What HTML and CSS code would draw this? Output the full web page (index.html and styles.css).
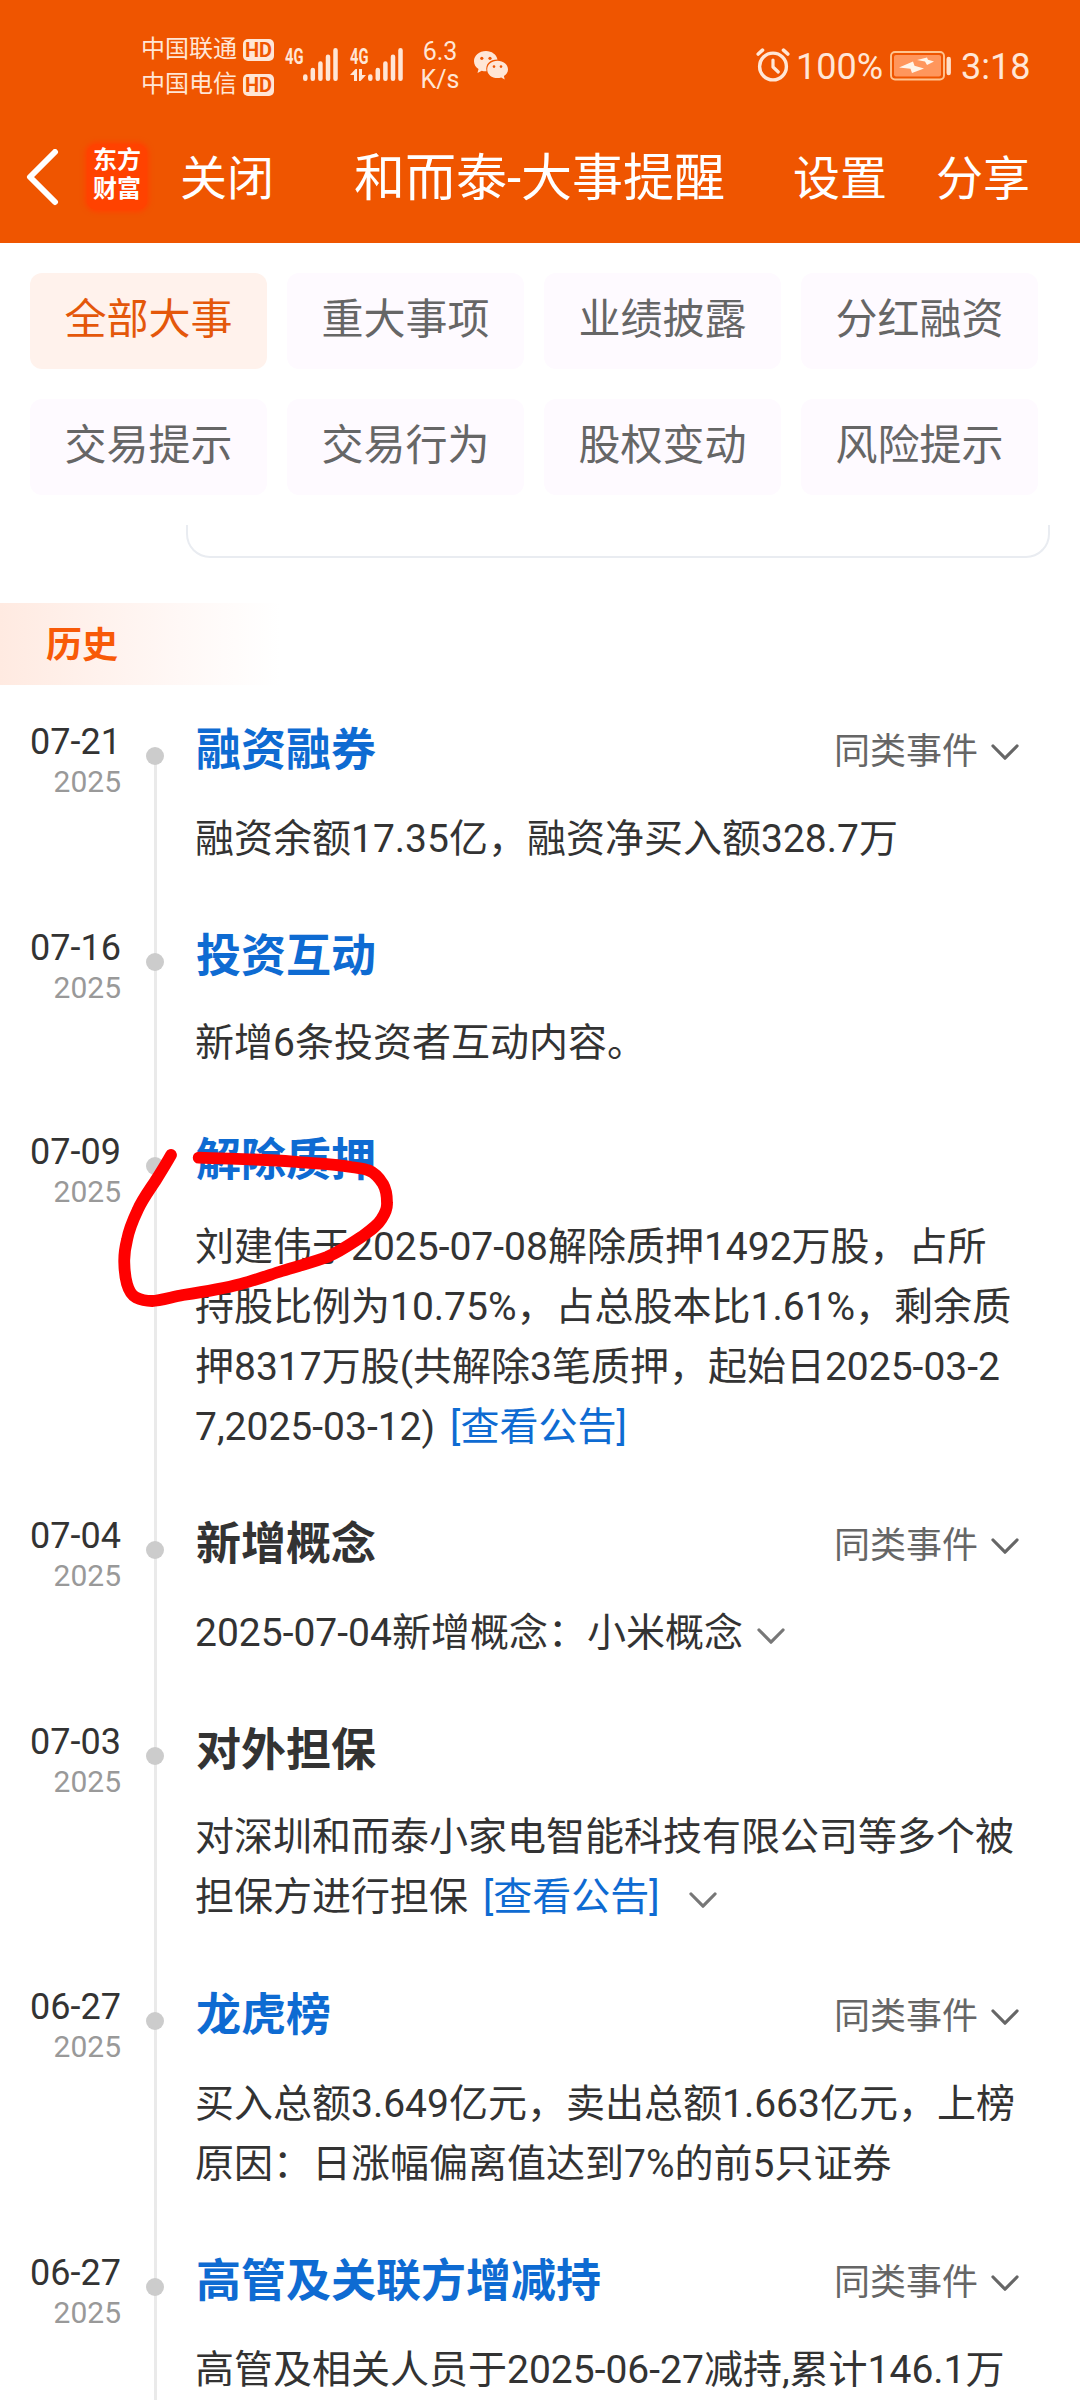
FILE: index.html
```html
<!DOCTYPE html>
<html lang="zh-CN">
<head>
<meta charset="utf-8">
<title>和而泰-大事提醒</title>
<link rel="stylesheet" href="styles.css">
</head>
<body>
<svg class="defs" width="0" height="0" aria-hidden="true">
  <symbol id="chevron" viewBox="0 0 28 17"><path d="M2 2 L14 14.2 L26 2" fill="none" stroke="currentColor" stroke-width="3.2" stroke-linecap="round" stroke-linejoin="round"/></symbol>
  <symbol id="bars" viewBox="0 0 35 33"><path d="M2.3 28.5V30.7M9.8 22V30.7M17.4 15.5V30.7M25 8.7V30.7M32.5 2.3V30.7" fill="none" stroke="currentColor" stroke-width="4.5" stroke-linecap="round"/></symbol>
</svg>
<div class="page">
  <header class="top">
    <div class="status">
      <div class="carriers">
        <div class="carrier"><span>中国联通</span><b class="hd">HD</b></div>
        <div class="carrier"><span>中国电信</span><b class="hd">HD</b></div>
      </div>
      <svg class="signal" width="53" height="33" viewBox="0 0 53 33">
        <text x="0" y="15.500" textLength="18.500" lengthAdjust="spacingAndGlyphs">4G</text>
        <use href="#bars" x="18" y="0" width="35" height="33"/>
      </svg>
      <svg class="signal signal-second" width="53" height="33" viewBox="0 0 53 33">
        <text x="0" y="15.500" textLength="18.500" lengthAdjust="spacingAndGlyphs">4G</text>
        <path d="M0 27 L5.500 21 H7 V33 H4 V27 Z M9 21 H12 V27 H16 L10.500 33 H9 Z" fill="currentColor"/>
        <use href="#bars" x="18" y="0" width="35" height="33"/>
      </svg>
      <div class="speed"><span>6.3</span><span>K/s</span></div>
      <svg class="wechat" width="34" height="30" viewBox="0 0 34 30">
        <path d="M12 1C5.300 1 0 5.500 0 11.200c0 3.300 1.700 6 4.500 7.900L3.500 23l4.200-2.300c1.600.5 3 .7 4.800.6C11 14 16 9.500 23.500 9.500 22.500 4.500 17.700 1 12 1Z" fill="currentColor"/>
        <path d="M23.500 10.700C17.700 10.700 13.200 14.600 13.200 19.400s4.500 8.700 10.300 8.700c1.400 0 2.500-.2 3.700-.6l3.500 1.900-.8-3.300c2.500-1.700 4.100-4 4.100-6.700 0-4.800-4.700-8.700-10.500-8.700Z" fill="currentColor"/>
        <g fill="#ef5500"><circle cx="7.800" cy="8.300" r="1.600"/><circle cx="16" cy="8.300" r="1.600"/><circle cx="20" cy="16.600" r="1.300"/><circle cx="27" cy="16.600" r="1.300"/></g>
      </svg>
      <svg class="alarm" width="34" height="34" viewBox="0 0 34 34" fill="none" stroke="currentColor" stroke-linecap="round">
        <circle cx="17" cy="18.500" r="13.400" stroke-width="3.400"/>
        <path d="M17 12V19L22.300 24" stroke-width="3.200" stroke-linejoin="round"/>
        <path d="M2.200 6L6.500 2.200M31.800 6L27.500 2.200" stroke-width="3.600"/>
      </svg>
      <span class="percent">100%</span>
      <svg class="battery" width="62" height="30" viewBox="0 0 62 30">
        <rect x="1" y="1" width="53" height="27.500" rx="4" fill="none" stroke="#ffc48f" stroke-width="1.900"/>
        <rect x="4" y="4" width="47" height="21.500" rx="2" fill="#ff965c"/>
        <path d="M9 16.500 L23 10.500 L24.500 14.800 L34 17.500 L22 22 L20.500 17.800 Z M27 9 L37 6.500 L38 8.800 L44 10.500 L37 14 L35 10.500 Z" fill="#fff5ea"/>
        <path d="M58.700 8V22" stroke="#ffdfc8" stroke-width="4.400" stroke-linecap="round"/>
      </svg>
      <span class="clock">3:18</span>
    </div>
    <nav class="nav">
      <svg class="back" width="34" height="57" viewBox="0 0 34 57"><path d="M29 3 L4 28 L29 53" fill="none" stroke="#fff" stroke-width="6" stroke-linecap="round" stroke-linejoin="round"/></svg>
      <div class="logo"><span>东方</span><span>财富</span></div>
      <span class="close">关闭</span>
      <h1 class="heading">和而泰-大事提醒</h1>
      <span class="settings">设置</span>
      <span class="share">分享</span>
    </nav>
  </header>

  <section class="filters">
    <span class="chip chip-active">全部大事</span>
    <span class="chip">重大事项</span>
    <span class="chip">业绩披露</span>
    <span class="chip">分红融资</span>
    <span class="chip">交易提示</span>
    <span class="chip">交易行为</span>
    <span class="chip">股权变动</span>
    <span class="chip">风险提示</span>
  </section>

  <div class="card-end"></div>
  <h2 class="section">历史</h2>

  <main class="timeline">
    <article class="event">
      <div class="date"><span class="day">07-21</span><span class="year">2025</span></div>
      <div class="rail rail-first"><i class="dot"></i></div>
      <div class="content">
        <div class="event-head"><h3 class="linked">融资融券</h3><span class="related">同类事件<svg class="chevron"><use href="#chevron"/></svg></span></div>
        <p>融资余额17.35亿，融资净买入额328.7万</p>
      </div>
    </article>
    <article class="event">
      <div class="date"><span class="day">07-16</span><span class="year">2025</span></div>
      <div class="rail"><i class="dot"></i></div>
      <div class="content">
        <div class="event-head"><h3 class="linked">投资互动</h3></div>
        <p>新增6条投资者互动内容。</p>
      </div>
    </article>
    <article class="event">
      <div class="date"><span class="day">07-09</span><span class="year">2025</span></div>
      <div class="rail"><i class="dot"></i></div>
      <div class="content">
        <div class="event-head"><h3 class="linked">解除质押</h3></div>
        <p>刘建伟于2025-07-08解除质押1492万股，占所<br>持股比例为10.75%，占总股本比1.61%，剩余质<br>押8317万股(共解除3笔质押，起始日2025-03-2<br>7,2025-03-12)<a class="notice">[查看公告]</a></p>
      </div>
      <svg class="scribble" width="280" height="160" viewBox="116 1148 280 160">
        <path d="M171 1155 C166 1164 161 1172 155 1181.500 C148 1192 142 1200 137.700 1210 C132 1222 128.500 1232 127 1240 C124.500 1250 124 1256 124.300 1263 C124.500 1271 125 1277 127 1284 C129 1291 131 1295 136 1297.500 C141 1300 146 1301 152 1301 C160 1300.500 172 1297 183 1295 C203 1292 222 1289 241 1284 C255 1280 268 1275.500 282 1271 C298 1266 314 1262 327 1257 C341 1251 352 1243 362 1236.500 C371 1230 378 1225 381.500 1219 C386 1212 387.300 1208 387 1203 C387 1196 386.500 1190 383 1184 C379 1177.500 375 1173 369 1170.500 C364 1168.500 358 1168 351 1167 C331 1163.500 312 1163.500 293 1161.700 C262 1159 230 1159 198.700 1157.700" fill="none" stroke="#ff0000" stroke-width="11.800" stroke-linecap="round" stroke-linejoin="round"/>
      </svg>
    </article>
    <article class="event">
      <div class="date"><span class="day">07-04</span><span class="year">2025</span></div>
      <div class="rail"><i class="dot"></i></div>
      <div class="content">
        <div class="event-head"><h3>新增概念</h3><span class="related">同类事件<svg class="chevron"><use href="#chevron"/></svg></span></div>
        <p>2025-07-04新增概念：小米概念<svg class="chevron more"><use href="#chevron"/></svg></p>
      </div>
    </article>
    <article class="event event-tall">
      <div class="date"><span class="day">07-03</span><span class="year">2025</span></div>
      <div class="rail"><i class="dot"></i></div>
      <div class="content">
        <div class="event-head"><h3>对外担保</h3></div>
        <p>对深圳和而泰小家电智能科技有限公司等多个被<br>担保方进行担保<a class="notice">[查看公告]</a><svg class="chevron more more-wide"><use href="#chevron"/></svg></p>
      </div>
    </article>
    <article class="event">
      <div class="date"><span class="day">06-27</span><span class="year">2025</span></div>
      <div class="rail"><i class="dot"></i></div>
      <div class="content">
        <div class="event-head"><h3 class="linked">龙虎榜</h3><span class="related">同类事件<svg class="chevron"><use href="#chevron"/></svg></span></div>
        <p>买入总额3.649亿元，卖出总额1.663亿元，上榜<br>原因：日涨幅偏离值达到7%的前5只证券</p>
      </div>
    </article>
    <article class="event">
      <div class="date"><span class="day">06-27</span><span class="year">2025</span></div>
      <div class="rail"><i class="dot"></i></div>
      <div class="content">
        <div class="event-head"><h3 class="linked">高管及关联方增减持</h3><span class="related">同类事件<svg class="chevron"><use href="#chevron"/></svg></span></div>
        <p>高管及相关人员于2025-06-27减持,累计146.1万</p>
      </div>
    </article>
  </main>
</div>
</body>
</html>
```
FILE: styles.css
```css
* { box-sizing: border-box; margin: 0; padding: 0; }

body {
  background: #fff;
  color: #333;
  font-family: Roboto, "Noto Sans CJK SC", sans-serif;
  font-weight: 400;
}

svg { display: block; flex: none; }
.defs { position: absolute; }

.page {
  width: 1080px;
  height: 2400px;
  overflow: hidden;
  white-space: nowrap;
}

/* Header */
.top { height: 243px; background: #ef5500; color: #fff; }

.status {
  display: flex;
  align-items: flex-start;
  height: 131px;
  padding: 32px 0 0 141px;
  color: #ffe6d6;
}
.carriers { width: 144px; }
.carrier {
  display: flex;
  align-items: center;
  gap: 6px;
  height: 35px;
  font-size: 24px;
  line-height: 35px;
}
.hd {
  width: 31px;
  height: 22px;
  border-radius: 5px;
  background: #ffe6d6;
  color: #ef5500;
  font-size: 20px;
  line-height: 22px;
  text-align: center;
}
.signal { margin-top: 16px; overflow: visible; }
.signal text { font-size: 22px; font-weight: 700; fill: currentColor; }
.signal-second { margin-left: 12px; }
.speed {
  display: flex;
  flex-direction: column;
  width: 40px;
  margin: 6px 0 0 17px;
  font-size: 25px;
  line-height: 28px;
  text-align: center;
}
.wechat { margin: 18px 0 0 14px; }
.alarm { margin: 16px 0 0 248px; }
.percent { width: 86px; margin: 14px 0 0 6px; font-size: 36px; line-height: 42px; }
.battery { margin: 19px 0 0 8px; }
.clock { margin: 14px 0 0 9px; font-size: 36px; line-height: 42px; }

.nav {
  display: flex;
  align-items: center;
  height: 92px;
  padding-left: 26px;
  font-size: 47px;
  line-height: 60px;
}
.logo {
  width: 60px;
  height: 66px;
  margin-left: 27px;
  padding-top: 2px;
  border-radius: 10px;
  background: #ff4200;
  box-shadow: 0 0 5px 2px #ff4200;
  font-size: 24px;
  font-weight: 700;
  line-height: 29px;
  text-align: center;
}
.logo span { display: block; }
.close { margin-left: 33px; padding-top: 3px; }
.heading { margin-left: 80px; padding-top: 3px; font-size: 51px; font-weight: 400; }
.settings { margin-left: 68px; padding-top: 3px; }
.share { margin-left: 49px; padding-top: 3px; }

/* Filter chips */
.filters {
  display: grid;
  grid-template-columns: repeat(4, 237px);
  gap: 30px 20px;
  padding: 30px 0 0 30px;
}
.chip {
  height: 96px;
  border-radius: 12px;
  background: #fefaff;
  color: #666;
  font-size: 42px;
  line-height: 93px;
  text-align: center;
}
.chip-active { background: #fff2ec; color: #e4570a; }

.card-end {
  width: 864px;
  height: 33px;
  margin: 30px 0 0 186px;
  border: 2px solid #e9ecf1;
  border-top: 0;
  border-radius: 0 0 24px 24px;
}

.section {
  height: 82px;
  margin-top: 45px;
  padding-left: 46px;
  background: linear-gradient(90deg, #ffeae1 0, #fff2ed 100px, #fff8f6 180px, #fff 280px);
  color: #f85a08;
  font-size: 36px;
  font-weight: 700;
  line-height: 87px;
}

/* Timeline */
.timeline { padding-top: 35px; }
.event { display: flex; position: relative; padding-left: 30px; }
.date { width: 91px; text-align: right; }
.day { display: block; font-size: 36px; line-height: 45px; }
.year { display: block; color: #999; font-size: 30px; line-height: 33px; }
.rail {
  width: 18px;
  margin-left: 25px;
  background: linear-gradient(#eaeaea, #eaeaea) 8px 0 / 3px 100% no-repeat;
}
.rail-first { background-position: 8px 36px; }
.dot {
  display: block;
  width: 18px;
  height: 18px;
  margin-top: 27px;
  border-radius: 50%;
  background: #ccc;
}
.content { width: 824px; margin-left: 31px; padding-bottom: 57px; }
.event-tall .content { padding-bottom: 58px; }
.event-head {
  display: flex;
  justify-content: space-between;
  min-height: 61px;
  margin-bottom: 26px;
  padding-top: 2px;
}
.event-head h3 { padding-left: 1px; font-size: 45px; font-weight: 700; line-height: 57px; }
.event-head .linked { color: #0e6bd2; }
.related {
  display: flex;
  align-items: center;
  gap: 13px;
  height: 61px;
  color: #666;
  font-size: 36px;
  line-height: 61px;
}
.chevron { width: 28px; height: 17px; color: #666; }
.content p { font-size: 39px; line-height: 60px; }
.notice { margin-left: 15px; color: #0e6bd2; }
.more { display: inline-block; margin-left: 14px; vertical-align: 1px; color: #777; }
.more-wide { margin-left: 29px; }

/* Freehand mark over the third event */
.scribble { position: absolute; left: 116px; top: 18px; }
```
